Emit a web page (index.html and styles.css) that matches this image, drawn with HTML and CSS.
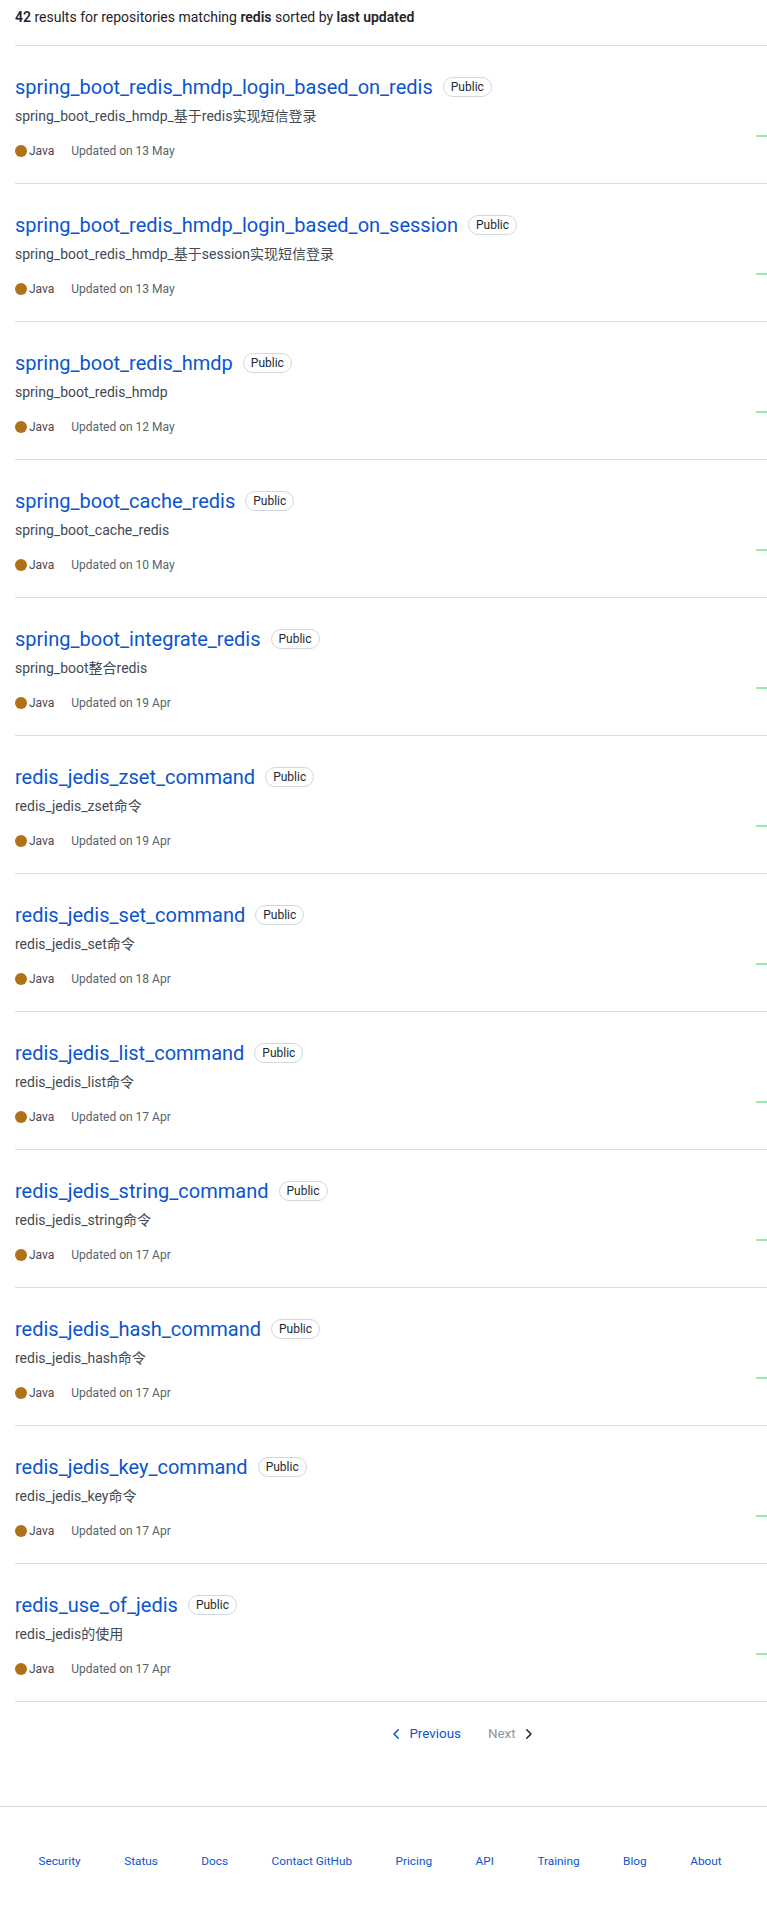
FILE: index.html
```html
<!DOCTYPE html>
<html lang="en">
<head>
<meta charset="utf-8">
<title>Repositories matching redis</title>
<link rel="stylesheet" href="styles.css">
</head>
<body>
<main class="page">
  <div class="results">
    <h3 class="summary"><strong>42</strong> results for repositories matching <strong>redis</strong> sorted by <strong>last updated</strong></h3>
    <ul class="repo-list">
      <li class="repo">
        <div class="repo-main">
          <h3 class="repo-title"><a href="#">spring_boot_redis_hmdp_login_based_on_redis</a><span class="badge">Public</span></h3>
          <p class="repo-desc">spring_boot_redis_hmdp_基于redis实现短信登录</p>
          <div class="repo-meta"><span class="lang"><span class="lang-dot"></span>Java</span><span>Updated on 13 May</span></div>
        </div>
        <div class="repo-spark"><svg width="155" height="30" viewBox="0 0 155 30"><polyline points="0,29 155,29" /></svg></div>
      </li>
      <li class="repo">
        <div class="repo-main">
          <h3 class="repo-title"><a href="#">spring_boot_redis_hmdp_login_based_on_session</a><span class="badge">Public</span></h3>
          <p class="repo-desc">spring_boot_redis_hmdp_基于session实现短信登录</p>
          <div class="repo-meta"><span class="lang"><span class="lang-dot"></span>Java</span><span>Updated on 13 May</span></div>
        </div>
        <div class="repo-spark"><svg width="155" height="30" viewBox="0 0 155 30"><polyline points="0,29 155,29" /></svg></div>
      </li>
      <li class="repo">
        <div class="repo-main">
          <h3 class="repo-title"><a href="#">spring_boot_redis_hmdp</a><span class="badge">Public</span></h3>
          <p class="repo-desc">spring_boot_redis_hmdp</p>
          <div class="repo-meta"><span class="lang"><span class="lang-dot"></span>Java</span><span>Updated on 12 May</span></div>
        </div>
        <div class="repo-spark"><svg width="155" height="30" viewBox="0 0 155 30"><polyline points="0,29 155,29" /></svg></div>
      </li>
      <li class="repo">
        <div class="repo-main">
          <h3 class="repo-title"><a href="#">spring_boot_cache_redis</a><span class="badge">Public</span></h3>
          <p class="repo-desc">spring_boot_cache_redis</p>
          <div class="repo-meta"><span class="lang"><span class="lang-dot"></span>Java</span><span>Updated on 10 May</span></div>
        </div>
        <div class="repo-spark"><svg width="155" height="30" viewBox="0 0 155 30"><polyline points="0,29 155,29" /></svg></div>
      </li>
      <li class="repo">
        <div class="repo-main">
          <h3 class="repo-title"><a href="#">spring_boot_integrate_redis</a><span class="badge">Public</span></h3>
          <p class="repo-desc">spring_boot整合redis</p>
          <div class="repo-meta"><span class="lang"><span class="lang-dot"></span>Java</span><span>Updated on 19 Apr</span></div>
        </div>
        <div class="repo-spark"><svg width="155" height="30" viewBox="0 0 155 30"><polyline points="0,29 155,29" /></svg></div>
      </li>
      <li class="repo">
        <div class="repo-main">
          <h3 class="repo-title"><a href="#">redis_jedis_zset_command</a><span class="badge">Public</span></h3>
          <p class="repo-desc">redis_jedis_zset命令</p>
          <div class="repo-meta"><span class="lang"><span class="lang-dot"></span>Java</span><span>Updated on 19 Apr</span></div>
        </div>
        <div class="repo-spark"><svg width="155" height="30" viewBox="0 0 155 30"><polyline points="0,29 155,29" /></svg></div>
      </li>
      <li class="repo">
        <div class="repo-main">
          <h3 class="repo-title"><a href="#">redis_jedis_set_command</a><span class="badge">Public</span></h3>
          <p class="repo-desc">redis_jedis_set命令</p>
          <div class="repo-meta"><span class="lang"><span class="lang-dot"></span>Java</span><span>Updated on 18 Apr</span></div>
        </div>
        <div class="repo-spark"><svg width="155" height="30" viewBox="0 0 155 30"><polyline points="0,29 155,29" /></svg></div>
      </li>
      <li class="repo">
        <div class="repo-main">
          <h3 class="repo-title"><a href="#">redis_jedis_list_command</a><span class="badge">Public</span></h3>
          <p class="repo-desc">redis_jedis_list命令</p>
          <div class="repo-meta"><span class="lang"><span class="lang-dot"></span>Java</span><span>Updated on 17 Apr</span></div>
        </div>
        <div class="repo-spark"><svg width="155" height="30" viewBox="0 0 155 30"><polyline points="0,29 155,29" /></svg></div>
      </li>
      <li class="repo">
        <div class="repo-main">
          <h3 class="repo-title"><a href="#">redis_jedis_string_command</a><span class="badge">Public</span></h3>
          <p class="repo-desc">redis_jedis_string命令</p>
          <div class="repo-meta"><span class="lang"><span class="lang-dot"></span>Java</span><span>Updated on 17 Apr</span></div>
        </div>
        <div class="repo-spark"><svg width="155" height="30" viewBox="0 0 155 30"><polyline points="0,29 155,29" /></svg></div>
      </li>
      <li class="repo">
        <div class="repo-main">
          <h3 class="repo-title"><a href="#">redis_jedis_hash_command</a><span class="badge">Public</span></h3>
          <p class="repo-desc">redis_jedis_hash命令</p>
          <div class="repo-meta"><span class="lang"><span class="lang-dot"></span>Java</span><span>Updated on 17 Apr</span></div>
        </div>
        <div class="repo-spark"><svg width="155" height="30" viewBox="0 0 155 30"><polyline points="0,29 155,29" /></svg></div>
      </li>
      <li class="repo">
        <div class="repo-main">
          <h3 class="repo-title"><a href="#">redis_jedis_key_command</a><span class="badge">Public</span></h3>
          <p class="repo-desc">redis_jedis_key命令</p>
          <div class="repo-meta"><span class="lang"><span class="lang-dot"></span>Java</span><span>Updated on 17 Apr</span></div>
        </div>
        <div class="repo-spark"><svg width="155" height="30" viewBox="0 0 155 30"><polyline points="0,29 155,29" /></svg></div>
      </li>
      <li class="repo">
        <div class="repo-main">
          <h3 class="repo-title"><a href="#">redis_use_of_jedis</a><span class="badge">Public</span></h3>
          <p class="repo-desc">redis_jedis的使用</p>
          <div class="repo-meta"><span class="lang"><span class="lang-dot"></span>Java</span><span>Updated on 17 Apr</span></div>
        </div>
        <div class="repo-spark"><svg width="155" height="30" viewBox="0 0 155 30"><polyline points="0,29 155,29" /></svg></div>
      </li>
    </ul>
    <nav class="pagination">
      <a class="page-link" href="#"><svg class="chev" width="16" height="16" viewBox="0 0 16 16"><path d="M9.78 12.78a.75.75 0 0 1-1.06 0L4.47 8.53a.75.75 0 0 1 0-1.06l4.25-4.25a.751.751 0 0 1 1.042.018.751.751 0 0 1 .018 1.042L6.06 8l3.72 3.72a.75.75 0 0 1 0 1.06Z"/></svg>Previous</a>
      <span class="page-link disabled">Next<svg class="chev next" width="16" height="16" viewBox="0 0 16 16"><path d="M6.22 3.22a.75.75 0 0 1 1.06 0l4.25 4.25a.75.75 0 0 1 0 1.06l-4.25 4.25a.751.751 0 0 1-1.042-.018.751.751 0 0 1-.018-1.042L9.94 8 6.22 4.28a.75.75 0 0 1 0-1.06Z"/></svg></span>
    </nav>
  </div>
</main>
<footer class="footer">
  <ul class="footer-links">
    <li><a href="#">Security</a></li>
    <li><a href="#">Status</a></li>
    <li><a href="#">Docs</a></li>
    <li><a href="#">Contact GitHub</a></li>
    <li><a href="#">Pricing</a></li>
    <li><a href="#">API</a></li>
    <li><a href="#">Training</a></li>
    <li><a href="#">Blog</a></li>
    <li><a href="#">About</a></li>
  </ul>
</footer>
</body>
</html>
```
FILE: styles.css
```css
html, body {
  margin: 0;
  padding: 0;
}
body {
  font-family: Roboto, "Noto Sans CJK SC", sans-serif;
  color: #1f2328;
  background: #ffffff;
  font-size: 14px;
  line-height: 1.5;
}
a {
  text-decoration: none;
  color: #0969da;
}
.page {
  padding-left: 15px;
  overflow: hidden;
}
.results {
  width: 895px;
}
.summary {
  margin: 0;
  padding-top: 7px;
  height: 21px;
  line-height: 21px;
  font-size: 14px;
  font-weight: 400;
  margin-bottom: 17px;
}
.summary strong {
  font-weight: 600;
}
.repo-list {
  list-style: none;
  margin: 0;
  padding: 0;
  border-bottom: 1px solid #d8dee4;
}
.repo {
  display: flex;
  border-top: 1px solid #d8dee4;
  padding: 26px 0 23px;
}
.repo-main {
  flex: 1;
  min-width: 0;
}
.repo-title {
  margin: 0;
  display: flex;
  align-items: center;
  font-size: 20px;
  font-weight: 400;
  line-height: 30px;
  height: 30px;
}
.repo-title a {
  color: #0b55cf;
}
.badge {
  margin-left: 10px;
  font-size: 12px;
  font-weight: 400;
  line-height: 18px;
  padding: 0 7px;
  border: 1px solid #d0d7de;
  border-radius: 2em;
  color: #24292f;
}
.repo-desc {
  margin: 4px 0 0;
  font-size: 14px;
  line-height: 21px;
  color: #424a53;
}
.repo-meta {
  margin-top: 15px;
  display: flex;
  align-items: center;
  font-size: 12px;
  line-height: 18px;
  color: #59636e;
}
.lang {
  display: inline-flex;
  align-items: center;
  margin-right: 17px;
  color: #424a53;
}
.lang-dot {
  width: 12px;
  height: 12px;
  border-radius: 50%;
  background: #b07219;
  margin-right: 2px;
}
.repo-spark {
  width: 154px;
  flex: none;
  padding-top: 35px;
}
.repo-spark svg {
  display: block;
}
.repo-spark polyline {
  fill: none;
  stroke: #9be9a8;
  stroke-width: 2;
}
.pagination {
  display: flex;
  justify-content: center;
  gap: 7px;
  margin-top: 17px;
  font-size: 13.4px;
  line-height: 20px;
}
.page-link {
  display: inline-flex;
  align-items: center;
  padding: 5px 10px;
  color: #0b55cf;
}
.page-link.disabled {
  color: #8c959f;
}
.chev {
  fill: #0b55cf;
  margin-right: 4px;
}
.chev.next {
  fill: #1f2328;
  margin-right: 0;
  margin-left: 4px;
}
.footer {
  margin-top: 57px;
  border-top: 1px solid #d0d7de;
  padding: 45px 7px 0 0;
  height: 98px;
}
.footer-links {
  list-style: none;
  margin: 0;
  padding: 0;
  display: flex;
  justify-content: center;
  gap: 43.5px;
  font-size: 11.8px;
  line-height: 18px;
}
.footer-links a {
  color: #0b55cf;
}
```
